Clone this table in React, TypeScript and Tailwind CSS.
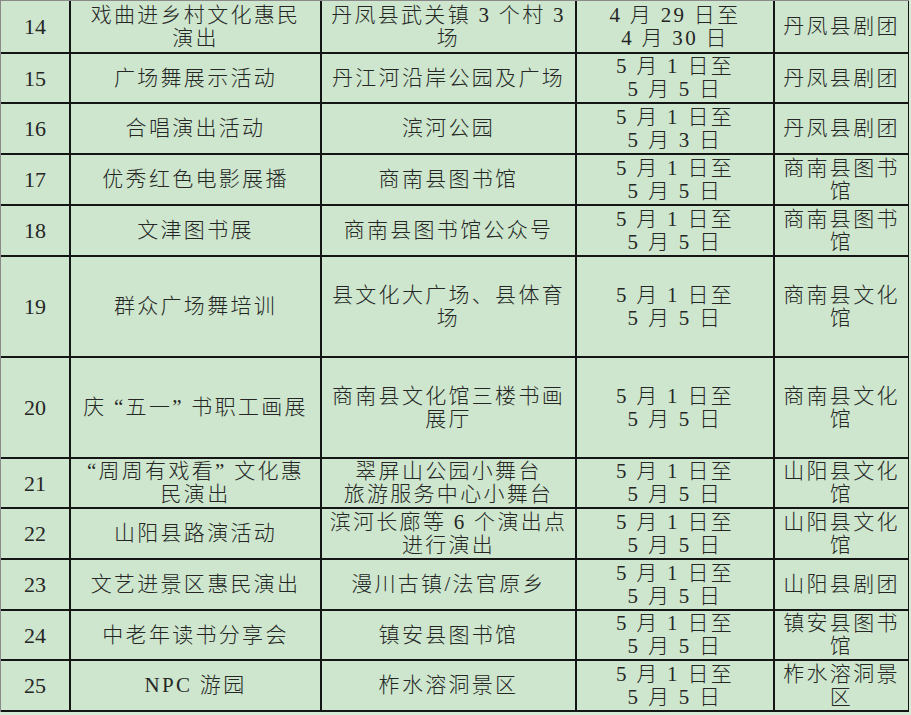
type Row = {
  n: string;
  act: string[];
  place: string[];
  date: string[];
  org: string[];
};

const d5 = ["5 月 1 日至", "5 月 5 日"];

const rows: Row[] = [
  { n: "14", act: ["戏曲进乡村文化惠民", "演出"], place: ["丹凤县武关镇 3 个村 3", "场"], date: ["4 月 29 日至", "4 月 30 日"], org: ["丹凤县剧团"] },
  { n: "15", act: ["广场舞展示活动"], place: ["丹江河沿岸公园及广场"], date: d5, org: ["丹凤县剧团"] },
  { n: "16", act: ["合唱演出活动"], place: ["滨河公园"], date: ["5 月 1 日至", "5 月 3 日"], org: ["丹凤县剧团"] },
  { n: "17", act: ["优秀红色电影展播"], place: ["商南县图书馆"], date: d5, org: ["商南县图书", "馆"] },
  { n: "18", act: ["文津图书展"], place: ["商南县图书馆公众号"], date: d5, org: ["商南县图书", "馆"] },
  { n: "19", act: ["群众广场舞培训"], place: ["县文化大广场、县体育", "场"], date: d5, org: ["商南县文化", "馆"] },
  { n: "20", act: ["庆 “五一” 书职工画展"], place: ["商南县文化馆三楼书画", "展厅"], date: d5, org: ["商南县文化", "馆"] },
  { n: "21", act: ["“周周有戏看” 文化惠", "民演出"], place: ["翠屏山公园小舞台", "旅游服务中心小舞台"], date: d5, org: ["山阳县文化", "馆"] },
  { n: "22", act: ["山阳县路演活动"], place: ["滨河长廊等 6 个演出点", "进行演出"], date: d5, org: ["山阳县文化", "馆"] },
  { n: "23", act: ["文艺进景区惠民演出"], place: ["漫川古镇/法官原乡"], date: d5, org: ["山阳县剧团"] },
  { n: "24", act: ["中老年读书分享会"], place: ["镇安县图书馆"], date: d5, org: ["镇安县图书", "馆"] },
  { n: "25", act: ["NPC 游园"], place: ["柞水溶洞景区"], date: d5, org: ["柞水溶洞景", "区"] },
];

function Cell({ lines }: { lines: string[] }) {
  return (
    <div className="flex flex-col items-center justify-center bg-[#cde6cd] text-center font-light leading-[23px] tracking-[2.3px]">
      {lines.map((l, i) => (
        <span key={i} className="whitespace-pre">
          {l}
        </span>
      ))}
    </div>
  );
}

export default function App() {
  return (
    <div
      className="h-[715px] w-[911px] overflow-hidden bg-[#d6ebd6] text-[21px] text-[#262626]"
      style={{ fontFamily: '"Liberation Serif", "Noto Sans CJK SC", serif' }}
    >
      <div className="grid w-[909px] grid-cols-[68px_249px_253px_196px_133px] grid-rows-[51px_48px_49px_49px_49px_99px_99px_48px_49px_49px_48px_49px] gap-[2px] border-l border-t border-[#8a8a8a] bg-[#151515] pb-[2px] pr-[2px]">
        {rows.map((r) => (
          <div key={r.n} className="contents">
            <div className="flex items-center justify-center bg-[#cde6cd] text-[22px]">{r.n}</div>
            <Cell lines={r.act} />
            <Cell lines={r.place} />
            <Cell lines={r.date} />
            <Cell lines={r.org} />
          </div>
        ))}
      </div>
    </div>
  );
}
